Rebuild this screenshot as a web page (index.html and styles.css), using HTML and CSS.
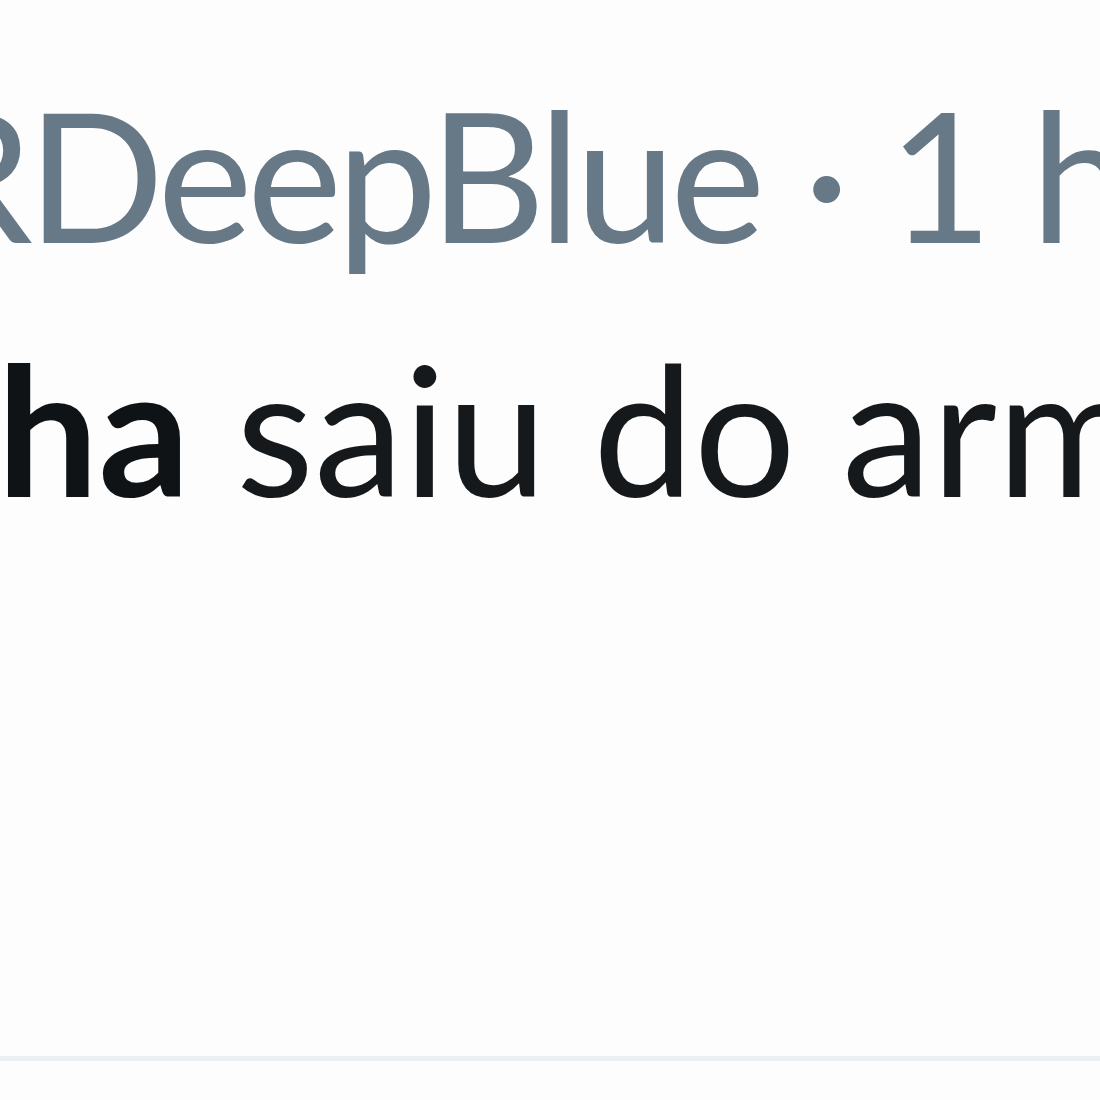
FILE: index.html
```html
<!DOCTYPE html>
<html>
<head>
<meta charset="utf-8">
<link rel="stylesheet" href="styles.css">
</head>
<body>
<div class="tweet">
  <div class="meta"><span class="handle">RDeepBlue</span> · 1 h</div>
  <div class="text"><b class="name">ha</b> saiu do armário</div>
</div>
</body>
</html>
```
FILE: styles.css
```css
html, body {
  margin: 0;
  padding: 0;
  background: #fdfdfd;
  width: 1100px;
  height: 1100px;
  overflow: hidden;
}
.tweet {
  width: 1100px;
  height: 1061px;
  box-sizing: border-box;
  padding-top: 46px;
  border-bottom: 5px solid #edf0f2;
  overflow: hidden;
  font-family: Lato, "Open Sans", sans-serif;
  font-size: 180px;
  line-height: 254px;
  white-space: nowrap;
}
.meta {
  color: #677887;
  margin-left: -80px;
  letter-spacing: -5.5px;
  word-spacing: 3px;
}
.text {
  color: #16191c;
  margin-left: -3px;
}
.name {
  font-weight: 700;
  color: #101316;
}
```
